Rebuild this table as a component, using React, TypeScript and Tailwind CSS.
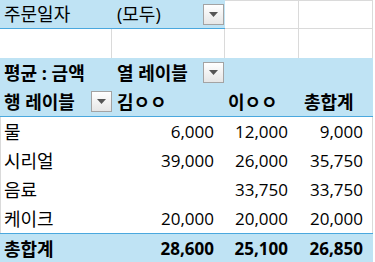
import React from "react";

const BLUE = "bg-[#bfe3f4]";

function DropButton() {
  return (
    <div className="flex h-[21px] w-[21px] items-center justify-center border border-[#a3a3a3] bg-gradient-to-b from-white to-[#e6e6e6]">
      <svg width="9" height="5" viewBox="0 0 9 5">
        <path d="M0 0 L9 0 L4.5 5 Z" fill="#555" />
      </svg>
    </div>
  );
}

const rows = [
  { label: "물", a: "6,000", b: "12,000", t: "9,000" },
  { label: "시리얼", a: "39,000", b: "26,000", t: "35,750" },
  { label: "음료", a: "", b: "33,750", t: "33,750" },
  { label: "케이크", a: "20,000", b: "20,000", t: "20,000" },
];

const grid = "grid grid-cols-[112px_113px_74px_74px] w-[373px]";
const num = "text-right text-[17px]";

export default function App() {
  return (
    <div
      className="h-[262px] w-[375px] overflow-hidden bg-white text-[18px] leading-none text-black"
      style={{ fontFamily: '"Open Sans", "Noto Sans CJK KR", sans-serif' }}
    >
      {/* 필터 영역 */}
      <div className={`${grid} h-[29px]`}>
        <div className={`col-span-2 flex items-center border-b border-[#4aa8de] ${BLUE}`}>
          <span className="w-[112px] pl-1">주문일자</span>
          <span className="flex-1 pl-[5px]">(모두)</span>
          <div className="mr-px">
            <DropButton />
          </div>
        </div>
        <div className="border-r border-b border-t border-[#dadada]" />
        <div className="border-r border-b border-t border-[#dadada]" />
      </div>
      <div className={`${grid} h-[29px]`}>
        <div className="border-r border-[#dadada]" />
        <div className="border-r border-[#dadada]" />
        <div className="border-r border-[#dadada]" />
        <div className="border-r border-[#dadada]" />
      </div>

      {/* 피벗 헤더 */}
      <div className={`${grid} h-[29px] items-center font-bold ${BLUE}`}>
        <span className="pl-1">평균 : 금액</span>
        <div className="flex items-center justify-between pl-[5px] pr-px">
          <span>열 레이블</span>
          <DropButton />
        </div>
        <span />
        <span />
      </div>
      <div className={`${grid} h-[30px] items-center border-b border-[#4aa8de] font-bold ${BLUE}`}>
        <div className="flex items-center justify-between pl-1">
          <span>행 레이블</span>
          <DropButton />
        </div>
        <span className="pl-[5px]">김ㅇㅇ</span>
        <span className="pl-[3px]">이ㅇㅇ</span>
        <span className="pl-[5px]">총합계</span>
      </div>

      {/* 데이터 */}
      <div className="w-[373px] border-r border-l border-[#dadada]">
        {rows.map((r) => (
          <div key={r.label} className="grid h-[29px] grid-cols-[111px_113px_74px_74px] items-center">
            <span className="pl-[3px]">{r.label}</span>
            <span className={`pr-[11px] ${num}`}>{r.a}</span>
            <span className={`pr-[11px] ${num}`}>{r.b}</span>
            <span className={`pr-[10px] ${num}`}>{r.t}</span>
          </div>
        ))}
      </div>
      <div className={`${grid} h-[30px] items-center border-t border-[#4aa8de] font-bold ${BLUE}`}>
        <span className="pl-1">총합계</span>
        <span className={`pr-[11px] ${num}`}>28,600</span>
        <span className={`pr-[11px] ${num}`}>25,100</span>
        <span className={`pr-[10px] ${num}`}>26,850</span>
      </div>
    </div>
  );
}
